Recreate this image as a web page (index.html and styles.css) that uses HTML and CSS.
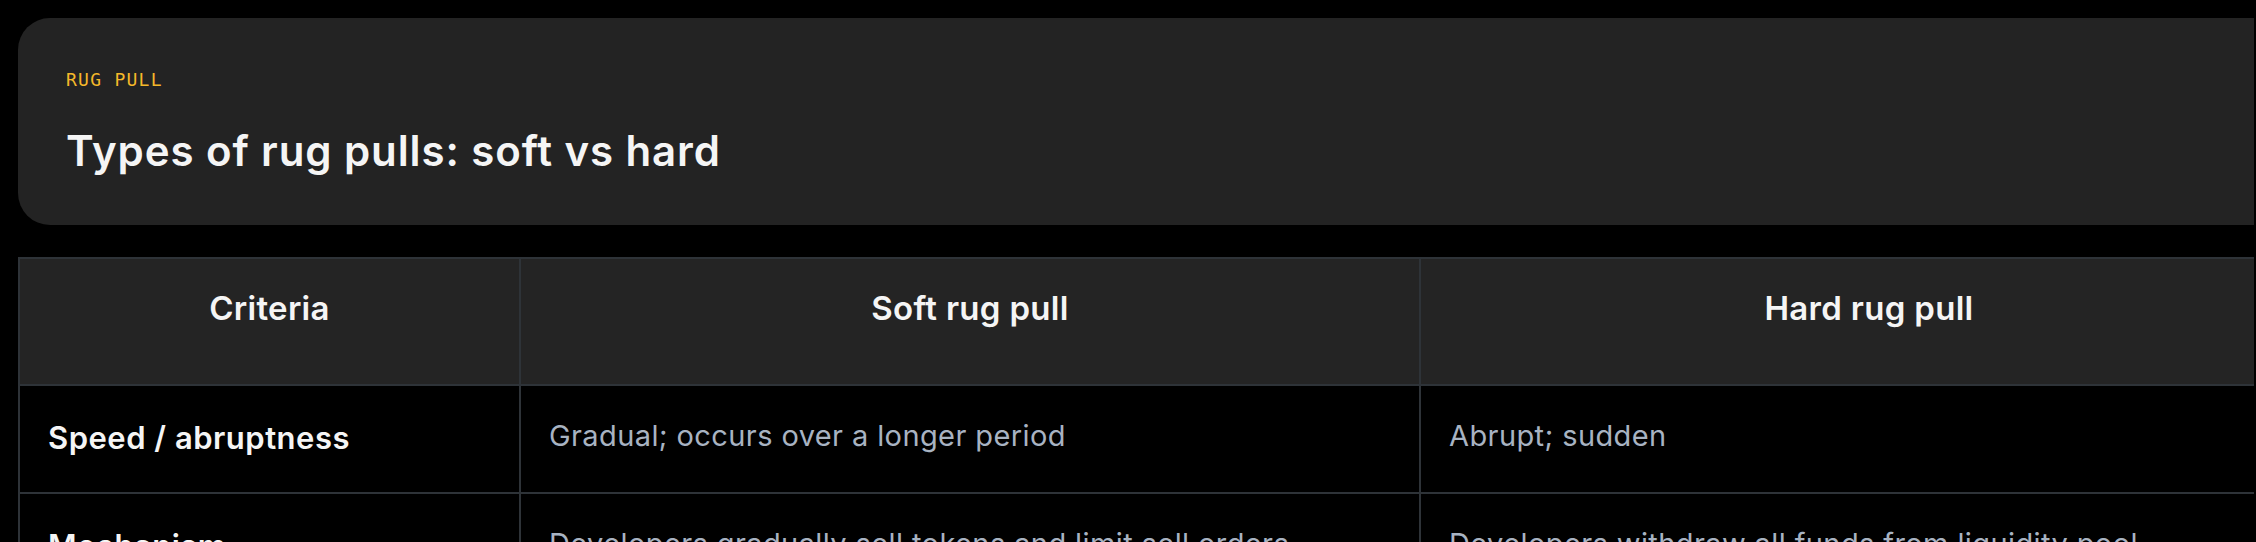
FILE: index.html
```html
<!DOCTYPE html>
<html lang="en">
<head>
<meta charset="utf-8">
<title>Types of rug pulls: soft vs hard</title>
<link rel="stylesheet" href="styles.css">
</head>
<body>
<div class="viewport">
  <main class="page">
    <section class="hero">
      <p class="eyebrow">RUG PULL</p>
      <h1 class="title">Types of rug pulls: soft vs hard</h1>
    </section>
    <table class="compare">
      <colgroup>
        <col class="col-criteria">
        <col class="col-soft">
        <col class="col-hard">
      </colgroup>
      <thead>
        <tr>
          <th>Criteria</th>
          <th>Soft rug pull</th>
          <th>Hard rug pull</th>
        </tr>
      </thead>
      <tbody>
        <tr>
          <td class="crit">Speed / abruptness</td>
          <td>Gradual; occurs over a longer period</td>
          <td>Abrupt; sudden</td>
        </tr>
        <tr>
          <td class="crit">Mechanism</td>
          <td>Developers gradually sell tokens and limit sell orders</td>
          <td>Developers withdraw all funds from liquidity pool</td>
        </tr>
      </tbody>
    </table>
  </main>
</div>
</body>
</html>
```

FILE: styles.css
```css
html, body {
  margin: 0;
  background: #000;
}

.viewport {
  margin-right: 2px;
  overflow: hidden;
}

.page {
  width: 2301px;
  padding: 18px 0 0 18px;
  font-family: Inter, "Noto Sans", sans-serif;
}

.hero {
  background: #232323;
  border-radius: 32px;
  padding: 50px 48px 50px;
}

.eyebrow {
  margin: 0;
  font-family: "DejaVu Sans Mono", "Liberation Mono", monospace;
  font-size: 18px;
  line-height: 24px;
  letter-spacing: 0.07em;
  color: #f5b82a;
}

.title {
  margin: 35px 0 0;
  font-size: 42px;
  line-height: 48px;
  font-weight: 600;
  letter-spacing: 0.9px;
  color: #f5f5f5;
}

.compare {
  margin-top: 32px;
  width: 100%;
  border-collapse: collapse;
  table-layout: fixed;
  border: 2px solid #2e3338;
}

.col-criteria { width: 501px; }
.col-soft { width: 900px; }

.compare th {
  background: #242424;
  color: #f5f5f5;
  font-size: 33px;
  font-weight: 600;
  line-height: 1.6;
  letter-spacing: 0.3px;
  padding: 23px 28px 49px;
  text-align: center;
  vertical-align: top;
  border: 2px solid #2e3338;
}

.compare td {
  padding: 27px 28px 30px;
  border: 2px solid #2e3338;
  font-size: 29px;
  line-height: 1.6;
  letter-spacing: 0.4px;
  color: #a8b3c2;
  vertical-align: top;
  text-align: left;
}

.compare td.crit {
  color: #f5f5f5;
  font-weight: 600;
  font-size: 31px;
  letter-spacing: 0.5px;
}
```
